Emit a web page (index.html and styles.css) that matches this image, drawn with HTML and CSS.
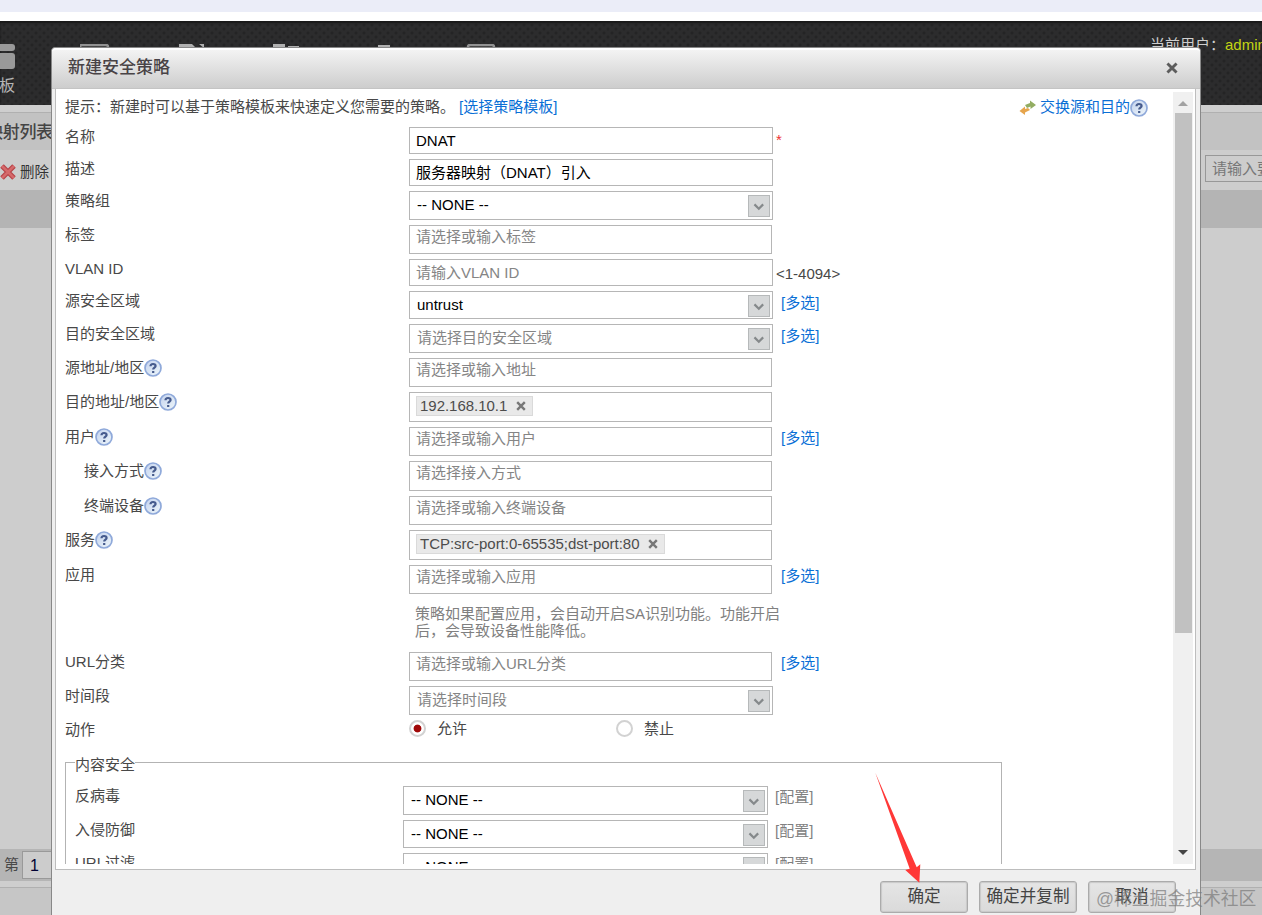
FILE: index.html
```html
<!DOCTYPE html>
<html lang="zh-CN">
<head>
<meta charset="utf-8">
<title>新建安全策略</title>
<link rel="stylesheet" href="styles.css">
</head>
<body>
<svg class="defs" width="0" height="0">
  <defs>
    <linearGradient id="helpBg" x1="0" y1="0" x2="1" y2="1"><stop offset="0" stop-color="#c3d2ee"/><stop offset="1" stop-color="#eff7fa"/></linearGradient>
    <symbol id="help" viewBox="0 0 18 18">
      <circle cx="9" cy="9" r="8" fill="url(#helpBg)" stroke="#8fa9da" stroke-width="1.7"/>
      <path d="M6.500 7.200C6.500 4.400 11.600 4.300 11.600 6.900C11.600 8.600 9.200 8.700 9.200 10.600M9.200 12v2" fill="none" stroke="#465b8d" stroke-width="2.2"/>
    </symbol>
    <symbol id="chev" viewBox="0 0 22 22"><path d="M6 9.200l4.800 4.800 4.800-4.800" fill="none" stroke="#85898b" stroke-width="2.4"/></symbol>
    <symbol id="cross" viewBox="0 0 10 10"><path d="M1.200 1.200l7.600 7.600M8.800 1.200L1.200 8.800" fill="none" stroke="currentColor" stroke-width="2.4"/></symbol>
  </defs>
</svg>
<div class="page">
  <div class="browser-bar"></div>
  <header class="top">
    <div class="nav-item"><i class="panel-a"></i><i class="panel-b"></i><span>面板</span></div>
    <svg class="nav-icons" width="430" height="10"><path d="M2 8V3q0-2 2-2h24q2 0 2 2v5M390 8V3q0-2 2-2h22q2 0 2 2v5" transform="translate(-2 0)" fill="none" stroke="#929292" stroke-width="2.5"/><path d="M99 0h13l4 4H99zM119 0h5v4zM193 0h12v5h-12zM208 2h11v3h-11zM298 1h12v4h-12z" fill="#b0b0b0"/></svg>
    <div class="user">当前用户：<b>admin</b></div>
  </header>
  <div class="strip"></div>
  <div class="list-title"><span>映射列表</span></div>
  <div class="toolbar">
    <div class="delete"><svg width="17" height="18" viewBox="0 0 17 18"><path d="M2 3l12 12M14 3L2 15" stroke="#b64449" stroke-width="5"/><path d="M2 3l12 12M14 3L2 15" stroke="#d5696b" stroke-width="2.5"/></svg><span>删除</span></div>
    <div class="search">请输入要查询</div>
  </div>
  <div class="table-head"></div>
  <div class="table-body"></div>
  <div class="pager"><span>第</span><div class="page-no">1</div></div>
  <div class="strip low"></div>
  <div class="bottom"></div>
</div>

<section class="dialog">
  <header class="dialog-head"><h1>新建安全策略</h1><svg class="close" width="12" height="12"><use href="#cross"/></svg></header>
  <div class="dialog-body">
    <div class="scroll">
      <div class="tip">
        <span>提示：新建时可以基于策略模板来快速定义您需要的策略。</span><a>[选择策略模板]</a>
        <span class="swap"><svg width="18" height="16" viewBox="0 0 18 16"><path d="M6 5l5-2V.500l6 4.500-5.500 4V6.500L8 8z" fill="#93ad62"/><path d="M11 10l-5 2.500V15L.500 11 6 6.500V9l3-1z" fill="#e6a54d"/></svg><a>交换源和目的</a><svg class="help" width="18" height="18"><use href="#help"/></svg></span>
      </div>
      <div class="row r32"><label>名称</label><div class="input">DNAT</div><em>*</em></div>
      <div class="row r32"><label>描述</label><div class="input">服务器映射（DNAT）引入</div></div>
      <div class="row r34"><label>策略组</label><div class="select">-- NONE --<svg width="22" height="22"><use href="#chev"/></svg></div></div>
      <div class="row r34"><label>标签</label><div class="picker">请选择或输入标签</div></div>
      <div class="row r32"><label>VLAN ID</label><div class="input hintful">请输入VLAN ID</div><span class="range">&lt;1-4094&gt;</span></div>
      <div class="row r33"><label>源安全区域</label><div class="select short">untrust<svg width="22" height="22"><use href="#chev"/></svg></div><a>[多选]</a></div>
      <div class="row r34"><label>目的安全区域</label><div class="select hintful">请选择目的安全区域<svg width="22" height="22"><use href="#chev"/></svg></div><a>[多选]</a></div>
      <div class="row r34"><label>源地址/地区<svg class="help" width="18" height="18"><use href="#help"/></svg></label><div class="picker">请选择或输入地址</div></div>
      <div class="row r35"><label>目的地址/地区<svg class="help" width="18" height="18"><use href="#help"/></svg></label><div class="picker tall"><span class="token">192.168.10.1<svg width="10" height="10"><use href="#cross"/></svg></span></div></div>
      <div class="row r34"><label>用户<svg class="help" width="18" height="18"><use href="#help"/></svg></label><div class="picker">请选择或输入用户</div><a>[多选]</a></div>
      <div class="row r35"><label class="sub">接入方式<svg class="help" width="18" height="18"><use href="#help"/></svg></label><div class="picker tall">请选择接入方式</div></div>
      <div class="row r34"><label class="sub">终端设备<svg class="help" width="18" height="18"><use href="#help"/></svg></label><div class="picker">请选择或输入终端设备</div></div>
      <div class="row r35"><label>服务<svg class="help" width="18" height="18"><use href="#help"/></svg></label><div class="picker tall"><span class="token">TCP:src-port:0-65535;dst-port:80<svg width="10" height="10"><use href="#cross"/></svg></span></div></div>
      <div class="row"><label>应用</label><div class="picker">请选择或输入应用</div><a>[多选]</a></div>
      <p class="note">策略如果配置应用，会自动开启SA识别功能。功能开启<br>后，会导致设备性能降低。</p>
      <div class="row r34"><label>URL分类</label><div class="picker">请选择或输入URL分类</div><a>[多选]</a></div>
      <div class="row r34"><label>时间段</label><div class="select hintful">请选择时间段<svg width="22" height="22"><use href="#chev"/></svg></div></div>
      <div class="row action"><label>动作</label><div class="radio"><i class="on"></i>允许</div><div class="radio"><i></i>禁止</div></div>
      <fieldset class="group">
        <legend>内容安全</legend>
        <div class="row r34"><label>反病毒</label><div class="select">-- NONE --<svg width="22" height="22"><use href="#chev"/></svg></div><span class="config">[配置]</span></div>
        <div class="row r33"><label>入侵防御</label><div class="select short">-- NONE --<svg width="22" height="22"><use href="#chev"/></svg></div><span class="config">[配置]</span></div>
        <div class="row r34"><label>URL过滤</label><div class="select">-- NONE --<svg width="22" height="22"><use href="#chev"/></svg></div><span class="config">[配置]</span></div>
      </fieldset>
    </div>
    <div class="scrollbar"><i class="up"></i><div class="thumb"></div><i class="down"></i></div>
  </div>
  <footer class="dialog-foot"><button class="w88">确定</button><button class="w97">确定并复制</button><button class="w88">取消</button></footer>
</section>
<svg class="pointer" width="48" height="112"><path d="M.3.700L41.700 95.300l3.600-3L44.300 110.700 30.300 98l4.400-1.300z" fill="#ff3837"/></svg>
<div class="watermark">@稀土掘金技术社区</div>
</body>
</html>
```
FILE: styles.css
```css
* { box-sizing: border-box; }
body {
  margin: 0;
  width: 1262px;
  height: 915px;
  overflow: hidden;
  position: relative;
  font: 15px/18px "Liberation Sans", "Noto Sans CJK SC", sans-serif;
  color: #484848;
  background: #cdcdcd;
}
.defs { position: absolute; }
svg { display: block; flex: none; }
a { color: #0a6fd6; }

/* Dimmed page behind the dialog */
.page { display: flex; flex-direction: column; height: 915px; }
.browser-bar { height: 21px; background: #fff; border-top: 12px solid #ebedf8; }
.top {
  height: 84px;
  display: flex;
  align-items: flex-start;
  overflow: hidden;
  background-color: #2c2c2d;
  background-image: radial-gradient(circle, #242425 1px, transparent 2px), radial-gradient(circle, #242425 1px, transparent 2px);
  background-size: 8px 8px;
  background-position: 0 0, 4px 4px;
  box-shadow: inset 0 2px 2px #181818;
}
.nav-item { width: 80px; padding-top: 23px; display: flex; flex-direction: column; align-items: flex-start; color: #b5b5b5; }
.nav-item i { width: 15px; background: #999; border-radius: 0 3px 3px 0; }
.panel-a { height: 7px; margin-bottom: 2px; }
.panel-b { height: 16px; }
.nav-item span { margin: 7px 0 0 -17px; font-size: 16px; line-height: 20px; }
.nav-icons { margin-top: 23px; }
.user { margin: 14px 0 0 auto; width: 112px; white-space: nowrap; color: #cfcfcf; line-height: 20px; }
.user b { font-weight: 400; color: #c3d513; }
.strip { height: 8px; background: #cecece; border-bottom: 1px solid #b0b0b0; }
.list-title { height: 37px; width: 100%; background: #c2c2c2; line-height: 40px; font-size: 17px; font-weight: 500; color: #444; }
.list-title span { margin-left: -14px; letter-spacing: -.3px; }
.toolbar { height: 40px; display: flex; justify-content: space-between; background: #cdcdcd; }
.delete { display: flex; align-items: center; gap: 3px; color: #333; font-size: 14.5px; padding-top: 3px; }
.search { width: 57px; height: 27px; margin-top: 5px; border: 1px solid #989898; border-right: 0; padding-left: 6px; line-height: 25px; color: #777; overflow: hidden; white-space: nowrap; }
.table-head { height: 38px; background: #b4b4b4; }
.table-body { height: 621px; }
.pager { height: 32px; background: #b5b5b5; display: flex; align-items: center; padding-left: 4px; gap: 3px; }
.page-no { width: 34px; height: 28px; border: 1px solid #999; background: #ccc; line-height: 27px; padding-left: 7px; font-size: 16px; color: #003; }
.strip.low { height: 7px; }
.bottom { flex: 1; background: #c6c6c6; }

/* Dialog window */
.dialog {
  position: absolute;
  left: 51px;
  top: 47px;
  width: 1150px;
  height: 880px;
  display: flex;
  flex-direction: column;
  border: 1px solid #888;
  border-radius: 4px 4px 0 0;
  background: #efefef;
}
.dialog-head {
  height: 41px;
  display: flex;
  align-items: center;
  justify-content: space-between;
  padding: 0 22px 3px 16px;
  border-top: 2px solid #fff;
  border-bottom: 1px solid #c4c4c4;
  border-radius: 4px 4px 0 0;
  background: linear-gradient(#f3f3f3, #cdcdcd);
}
.dialog-head h1 { margin: 1px 0 0; font-size: 17px; font-weight: 500; line-height: 24px; color: #494346; }
.close { color: #5c5c5c; }
.dialog-body {
  height: 781px;
  margin: 0 4px 0 3px;
  padding-bottom: 5px;
  display: flex;
  border: 1px solid #bdbdbd;
  border-top: 0;
  background: #fff;
}
.scroll { flex: 1; overflow: hidden; padding-left: 9px; }
.scrollbar { width: 20px; margin: 3px 2px 0 0; background: #f0f0f0; display: flex; flex-direction: column; align-items: center; }
.up, .down { border: 5px solid transparent; }
.up { border-top: 0; border-bottom-color: #a2a2a2; margin: 9px 0 7px; }
.down { border-bottom: 0; border-top-color: #444; margin-top: 217px; }
.thumb { width: 17px; height: 520px; background: #c1c1c1; }

/* Form */
.tip { height: 38px; display: flex; align-items: flex-start; padding: 9px 25px 0 0; white-space: nowrap; }
.tip > a { margin-left: 4px; }
.swap { margin-left: auto; display: flex; }
.swap svg:first-child { margin: 2px 3px 0 0; }
.swap .help { margin-top: 1px; }
.row { display: flex; height: 29px; white-space: nowrap; }
.row label { width: 344px; height: 19px; flex: none; display: flex; padding-top: 1px; }
.row label.sub { padding-left: 19px; }
.r32 { height: 32px; }
.r33 { height: 33px; }
.r34 { height: 34px; }
.r35 { height: 35px; }
.input, .select, .picker { border: 1px solid #b6b6b6; background: #fff; flex: none; padding-left: 6px; color: #000; }
.input { width: 364px; height: 27px; line-height: 26px; }
.select { width: 364px; height: 29px; line-height: 26px; padding: 0 2px 0 7px; display: flex; justify-content: space-between; }
.select.short { height: 28px; }
.select svg { margin-top: 3px; background: #d6d8d9; border: 1px solid #b6b9ba; }
.picker { width: 363px; height: 29px; line-height: 22px; padding-left: 6px; color: #858585; }
.picker.tall { height: 30px; }
.hintful { color: #858585; }
.row > a { margin: 3px 0 0 8px; }
.row .picker + a { margin: 2px 0 0 9px; }
.row em { color: #e33; font-style: normal; margin: 4px 0 0 3px; }
.range { margin: 6px 0 0 3px; }
.token { display: inline-flex; align-items: center; gap: 9px; height: 20px; margin-top: 3px; padding: 0 6px 0 3px; border: 1px solid #dadada; background: #e9e9e9; color: #4c4c4c; vertical-align: top; letter-spacing: -.02px; }
.token svg { color: #777; }
.note { height: 58px; margin: 0; padding: 11px 0 0 350px; line-height: 17px; color: #808080; white-space: nowrap; }
.action { height: 42px; }
.radio { width: 207px; display: flex; gap: 11px; line-height: 17px; }
.radio i { width: 17px; height: 17px; border: 2px solid #d2d2d2; border-radius: 50%; background: #fff; }
.radio i.on { background: radial-gradient(circle, #a00808 0 3.5px, #fff 4.3px); }
.group { width: 937px; height: 180px; margin: -9px 0 0; padding: 0 0 0 9px; border: 1px solid #b3b3b3; }
.group legend { padding: 0; height: 18px; margin: 0 0 15px; position: relative; top: 3px; }
.group label { width: 328px; }
.group .select { width: 365px; }
.config { margin: 2px 0 0 7px; color: #808080; }

.dialog-foot { display: flex; justify-content: flex-end; gap: 11px; padding: 11px 24px 0 0; }
.dialog-foot button { height: 32px; padding: 0; border: 1px solid #ababab; border-radius: 3px; box-shadow: inset 0 0 1px 1px #c8c8c8; background: linear-gradient(#e5e5e5, #dadada); font: 16.6px/30px "Liberation Sans", "Noto Sans CJK SC", sans-serif; color: #444; white-space: nowrap; }
.dialog-foot .w88 { width: 88px; }
.dialog-foot .w97 { width: 98px; }
.pointer { position: absolute; left: 875px; top: 772px; }
.watermark { position: absolute; left: 1096px; top: 887px; font-size: 17.8px; line-height: 24px; white-space: nowrap; color: rgba(120, 120, 120, .7); }
```
